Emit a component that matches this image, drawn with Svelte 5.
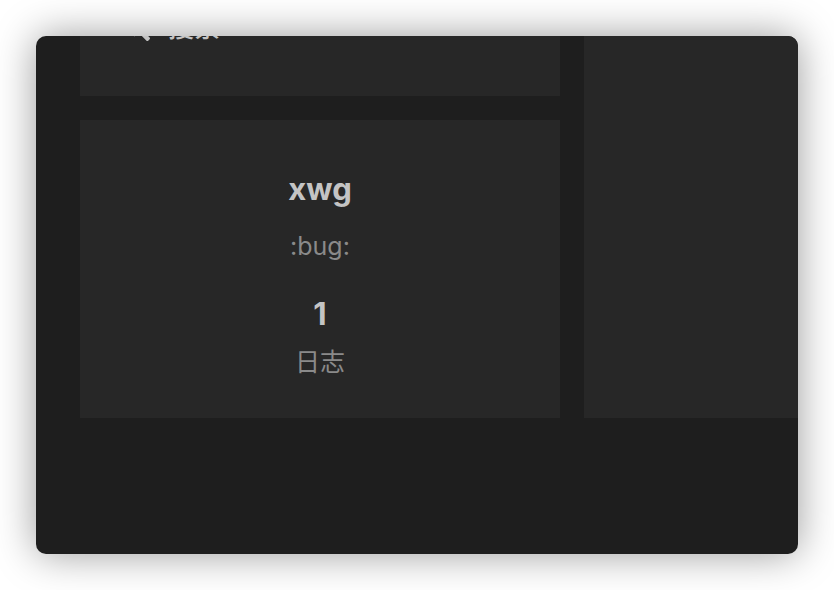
<script>
  const author = { name: 'xwg', description: ':bug:' };
  const stats = [{ count: 1, label: '日志' }];
</script>

<div class="stage">
  <div class="window">
    <div class="layout">
      <aside class="sidebar">
        <nav class="card menu">
          <a class="menu-item" href="#search">
            <svg class="icon" viewBox="0 0 512 512" aria-hidden="true">
              <path
                fill="currentColor"
                d="M505 442.7L405.3 343c-4.500-4.500-10.600-7-17-7H372c27.600-35.300 44-79.700 44-128C416 93.100 322.900 0 208 0S0 93.100 0 208s93.100 208 208 208c48.300 0 92.700-16.400 128-44v16.300c0 6.400 2.500 12.500 7 17l99.700 99.700c9.400 9.400 24.600 9.400 33.900 0l28.300-28.300c9.400-9.400 9.400-24.600.1-34zM208 336c-70.700 0-128-57.200-128-128 0-70.700 57.200-128 128-128 70.700 0 128 57.200 128 128 0 70.700-57.200 128-128 128z"
              />
            </svg>
            <span>搜索</span>
          </a>
        </nav>

        <section class="card profile">
          <h2 class="name">{author.name}</h2>
          <p class="description">{author.description}</p>
          {#each stats as stat}
            <a class="stat" href="#archives">
              <strong class="count">{stat.count}</strong>
              <span class="label">{stat.label}</span>
            </a>
          {/each}
        </section>
      </aside>

      <main class="card content"></main>
    </div>
  </div>
</div>

<style>
  :global(body) {
    margin: 0;
    background: #fff;
  }

  .stage {
    box-sizing: border-box;
    min-height: 100vh;
    padding: 36px;
    display: flex;
    overflow: hidden;
    font-family: Inter, "Noto Sans CJK SC", sans-serif;
  }

  .window {
    flex: 1;
    min-width: 0;
    overflow: hidden;
    border-radius: 10px;
    background: #1e1e1e;
    box-shadow: 0 0 40px rgba(0, 0, 0, 0.4);
  }

  .layout {
    display: flex;
    gap: 24px;
    padding: 0 0 136px 44px;
  }

  .sidebar {
    flex: 0 0 480px;
    display: flex;
    flex-direction: column;
    gap: 24px;
  }

  .card {
    background: #272727;
  }

  .menu {
    display: flex;
    align-items: flex-end;
    height: 60px;
    box-sizing: border-box;
    padding: 0 44px 48px;
  }

  .menu-item {
    flex: none;
    display: flex;
    align-items: center;
    gap: 18px;
    line-height: 40px;
    font-size: 26px;
    font-weight: 500;
    color: #c4c4c4;
    text-decoration: none;
  }

  .icon {
    width: 26px;
    height: 26px;
  }

  .profile {
    display: flex;
    flex-direction: column;
    align-items: center;
    padding: 48px 40px 38px;
  }

  .name {
    margin: 0;
    font-size: 31px;
    line-height: 42px;
    font-weight: 700;
    color: #c4c4c4;
  }

  .description {
    margin: 20px 0 32px;
    font-size: 25px;
    line-height: 32px;
    color: #8a8a8a;
  }

  .stat {
    display: flex;
    flex-direction: column;
    align-items: center;
    gap: 10px;
    text-decoration: none;
  }

  .count {
    font-size: 31px;
    line-height: 40px;
    font-weight: 700;
    color: #c4c4c4;
  }

  .label {
    font-size: 25px;
    line-height: 36px;
    color: #8a8a8a;
  }

  .content {
    flex: 1;
    min-width: 0;
  }
</style>
